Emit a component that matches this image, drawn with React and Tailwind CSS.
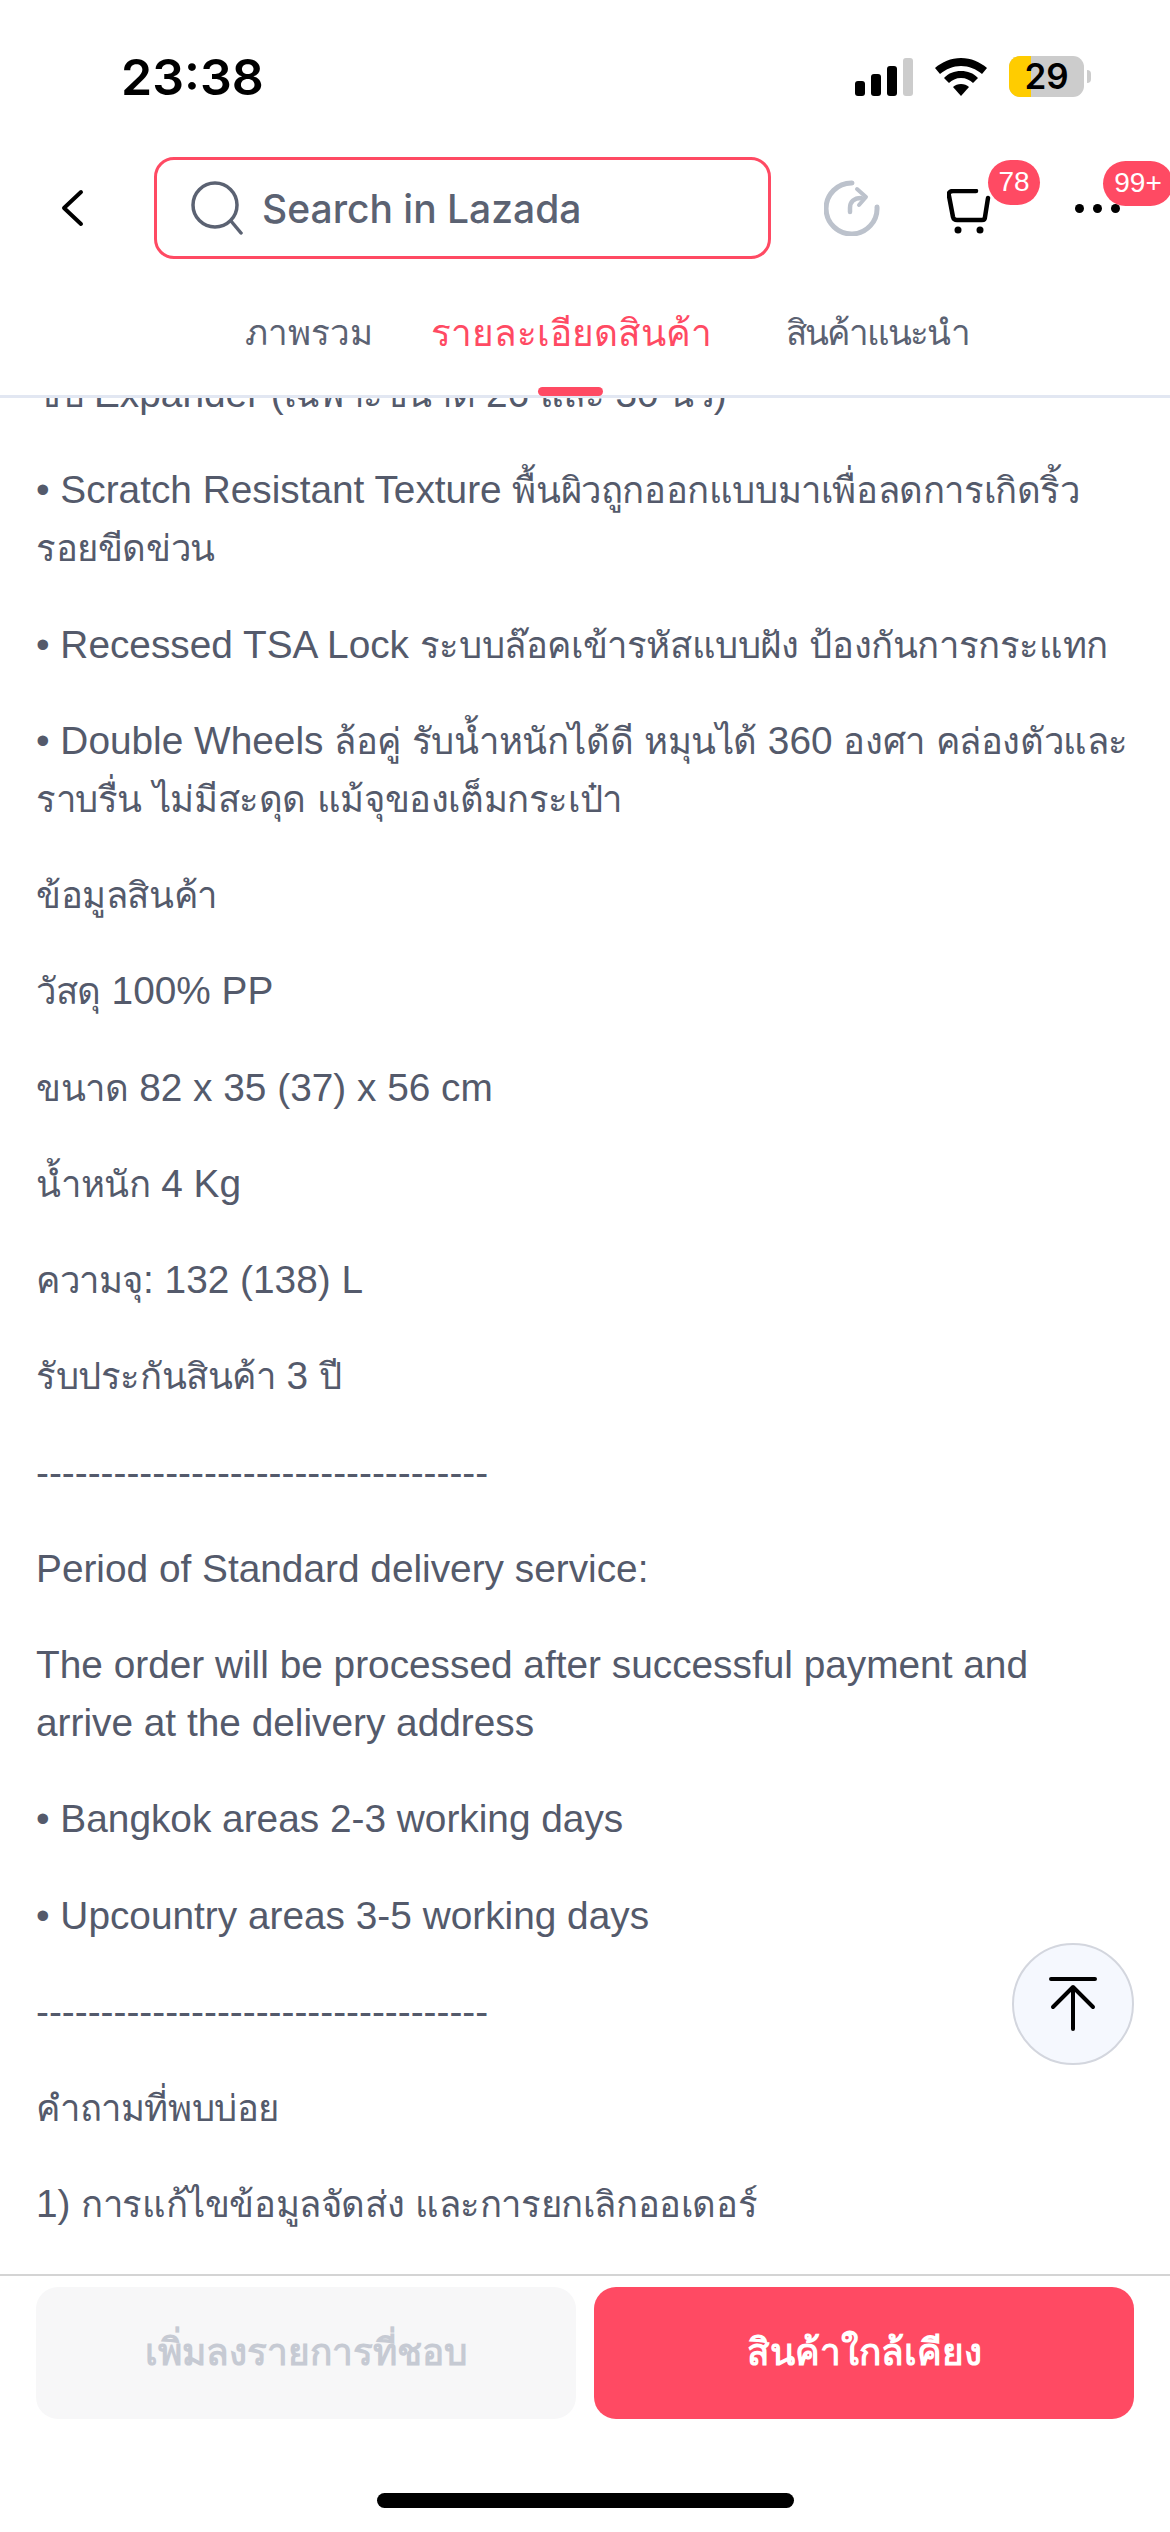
import React from 'react'

const bodyFont = "font-['Liberation_Sans','Noto_Sans',sans-serif]"

const details = [
  ['ซิป Expander (เฉพาะขนาด 26 และ 30 นิ้ว)'],
  ['• Scratch Resistant Texture พื้นผิวถูกออกแบบมาเพื่อลดการเกิดริ้ว', 'รอยขีดข่วน'],
  ['• Recessed TSA Lock ระบบล๊อคเข้ารหัสแบบฝัง ป้องกันการกระแทก'],
  ['• Double Wheels ล้อคู่ รับน้ำหนักได้ดี หมุนได้ 360 องศา คล่องตัวและ', 'ราบรื่น ไม่มีสะดุด แม้จุของเต็มกระเป๋า'],
  ['ข้อมูลสินค้า'],
  ['วัสดุ 100% PP'],
  ['ขนาด 82 x 35 (37) x 56 cm'],
  ['น้ำหนัก 4 Kg'],
  ['ความจุ: 132 (138) L'],
  ['รับประกันสินค้า 3 ปี'],
  ['-----------------------------------'],
  ['Period of Standard delivery service:'],
  ['The order will be processed after successful payment and', 'arrive at the delivery address'],
  ['• Bangkok areas 2-3 working days'],
  ['• Upcountry areas 3-5 working days'],
  ['-----------------------------------'],
  ['คำถามที่พบบ่อย'],
  ['1) การแก้ไขข้อมูลจัดส่ง และการยกเลิกออเดอร์'],
  ['ลูกค้าสามารถแก้ไขที่อยู่จัดส่งได้'],
]

// Thai fallback runs wider than the reference, so Thai runs get their own size
const Line = ({ text }) => (
  <span className="block h-[58px] whitespace-nowrap">
    {text.split(/([\u0E00-\u0E7F]+)/).map((part, i) =>
      i % 2 === 1 ? (
        <span key={i} className="text-[36.5px] leading-none tracking-[-0.4px]">{part}</span>
      ) : (
        part
      )
    )}
  </span>
)

const StatusBar = () => (
  <div className="flex h-[106px] shrink-0 items-end justify-between pl-[121px] pr-[79px]">
    <span className="font-['Inter',sans-serif] text-[50px] leading-[58px] font-semibold text-black">23:38</span>
    <div className="mb-[9px] flex items-center gap-[22px]">
      <svg width="58" height="38" viewBox="0 0 58 38">
        <rect x="0" y="23" width="10" height="15" rx="3" fill="#000" />
        <rect x="16" y="16" width="10" height="22" rx="3" fill="#000" />
        <rect x="32" y="8" width="10" height="30" rx="3" fill="#000" />
        <rect x="48" y="0" width="10" height="38" rx="3" fill="#ccc" />
      </svg>
      <svg width="52" height="38" viewBox="0 0 52 38">
        <path d="M26 0C16 0 7 4 0 10l5 6c6-5 13-8 21-8s15 3 21 8l5-6C45 4 36 0 26 0z" fill="#000" />
        <path d="M26 13c-7 0-12 2-17 7l5 5c3-3 7-5 12-5s9 2 12 5l5-5c-5-5-10-7-17-7z" fill="#000" />
        <path d="M26 26c-3 0-6 1-8 3l8 9 8-9c-2-2-5-3-8-3z" fill="#000" />
      </svg>
      <div className="flex items-center gap-[3px]">
        <div className="relative flex h-[41px] w-[75px] items-center justify-center overflow-hidden rounded-[11px] bg-[#cccccc]">
          <div className="absolute inset-y-0 left-0 w-[22px] bg-[#ffcc00]"></div>
          <span className="relative font-['Inter',sans-serif] text-[35px] leading-none font-semibold text-black">29</span>
        </div>
        <div className="h-[13px] w-[4px] rounded-r-full bg-[#cccccc]"></div>
      </div>
    </div>
  </div>
)

const SearchRow = () => (
  <div className="mt-[20px] flex h-[164px] shrink-0 items-center">
    <svg className="ml-[60px]" width="24" height="38" viewBox="0 0 24 38" fill="none" stroke="#000" strokeWidth="4" strokeLinecap="round" strokeLinejoin="round">
      <path d="M21 3L4 19l17 16" />
    </svg>
    <div className="ml-[70px] flex h-[102px] w-[617px] items-center rounded-[20px] border-[3px] border-[#ff4a63] pl-[34px]">
      <svg width="52" height="54" viewBox="0 0 52 54" fill="none" stroke="#5b6272" strokeWidth="3.5" strokeLinecap="round">
        <circle cx="24" cy="24" r="22" />
        <path d="M40 40l10 12" />
      </svg>
      <span className="ml-[19px] font-['Inter',sans-serif] text-[39px] leading-none font-medium text-[#5b6272]">Search in Lazada</span>
    </div>
    <svg className="ml-[53px]" width="56" height="56" viewBox="0 0 56 56" fill="none" stroke="#bcc2cc" strokeWidth="5" strokeLinecap="round" strokeLinejoin="round">
      <path d="M28 3A25.5 25.5 0 1 0 53 27" />
      <path d="M26 32v-4c0-6 4-10 11-10" strokeWidth="4.5" />
      <path d="M33 9l9 8-7 8" strokeWidth="4" />
    </svg>
    <div className="relative ml-[67px] mt-[7px]">
      <svg className="block" width="44" height="46" viewBox="0 0 44 46" fill="none" stroke="#000" strokeWidth="4.5" strokeLinecap="round" strokeLinejoin="round">
        <path d="M29 2H6C3 2 1 4 2 7l4 21c.5 2 2 3 4 3h25c2 0 3-1 3-3l3-19" />
        <circle cx="11" cy="41" r="3.5" fill="#000" stroke="none" />
        <circle cx="33" cy="41" r="3.5" fill="#000" stroke="none" />
      </svg>
      <span className="absolute left-[41px] top-[-29px] flex h-[45px] w-[52px] items-center justify-center rounded-full bg-[#ff4a63] font-['Liberation_Sans',sans-serif] text-[28px] leading-none text-white">78</span>
    </div>
    <div className="relative ml-[84px] flex gap-[9px]">
      <span className="h-[9px] w-[9px] rounded-full bg-black"></span>
      <span className="h-[9px] w-[9px] rounded-full bg-black"></span>
      <span className="h-[9px] w-[9px] rounded-full bg-black"></span>
      <span className="absolute left-[28px] top-[-43px] flex h-[45px] w-[70px] items-center justify-center rounded-full bg-[#ff4a63] font-['Liberation_Sans',sans-serif] text-[28px] leading-none text-white">99+</span>
    </div>
  </div>
)

const TabsRow = () => (
  <div className="relative h-[108px] shrink-0 border-b-[3px] border-[#e2e7f2] font-['Noto_Sans',sans-serif] text-[35px] leading-none">
    <div className="flex h-[82px] items-center pl-[245px]">
      <span className="w-[186px] text-[#5b6272]">ภาพรวม</span>
      <span className="w-[355px] text-[37px] font-medium text-[#ff4a63]">รายละเอียดสินค้า</span>
      <span className="tracking-[-1.8px] text-[#5b6272]">สินค้าแนะนำ</span>
    </div>
    <div className="absolute bottom-[-1px] left-[538px] h-[9px] w-[65px] rounded-full bg-[#ff4a63]"></div>
  </div>
)

const BottomBar = () => (
  <div className="h-[258px] shrink-0 border-t-2 border-[#d4d4d4] bg-white px-[36px] pt-[11px]">
    <div className="flex gap-[18px]">
      <button className="flex h-[132px] flex-1 items-center justify-center rounded-[22px] bg-[#f7f7f8] text-[37px] font-bold text-[#c6cad3]">เพิ่มลงรายการที่ชอบ</button>
      <button className="flex h-[132px] flex-1 items-center justify-center rounded-[22px] bg-[#ff4a63] text-[37px] font-bold text-white">สินค้าใกล้เคียง</button>
    </div>
    <div className="mx-auto mt-[74px] h-[15px] w-[417px] rounded-full bg-black"></div>
  </div>
)

const App = () => {
  return (
    <div className={`relative flex h-[2532px] w-[1170px] flex-col overflow-hidden bg-white ${bodyFont}`}>
      <StatusBar />
      <SearchRow />
      <TabsRow />
      <main className="min-h-0 flex-1 overflow-hidden px-[36px] text-[38.8px] leading-[58px] text-[#545a6b]">
        <div className="mt-[-33px] flex flex-col gap-[38.25px]">
          {details.map((lines, i) => (
            <p key={i}>
              {lines.map((line, j) => (
                <Line key={j} text={line} />
              ))}
            </p>
          ))}
        </div>
      </main>
      <BottomBar />
      {/* back to top */}
      <button className="absolute left-[1012px] top-[1943px] flex h-[122px] w-[122px] items-center justify-center rounded-full border-2 border-[#d3d6de] bg-[#f5f8fe]">
        <svg width="48" height="54" viewBox="0 0 48 54" fill="none" stroke="#000" strokeWidth="4" strokeLinecap="round" strokeLinejoin="round">
          <path d="M2 2h44M24 52V10M4 30L24 10l20 20" />
        </svg>
      </button>
    </div>
  )
}

export default App
